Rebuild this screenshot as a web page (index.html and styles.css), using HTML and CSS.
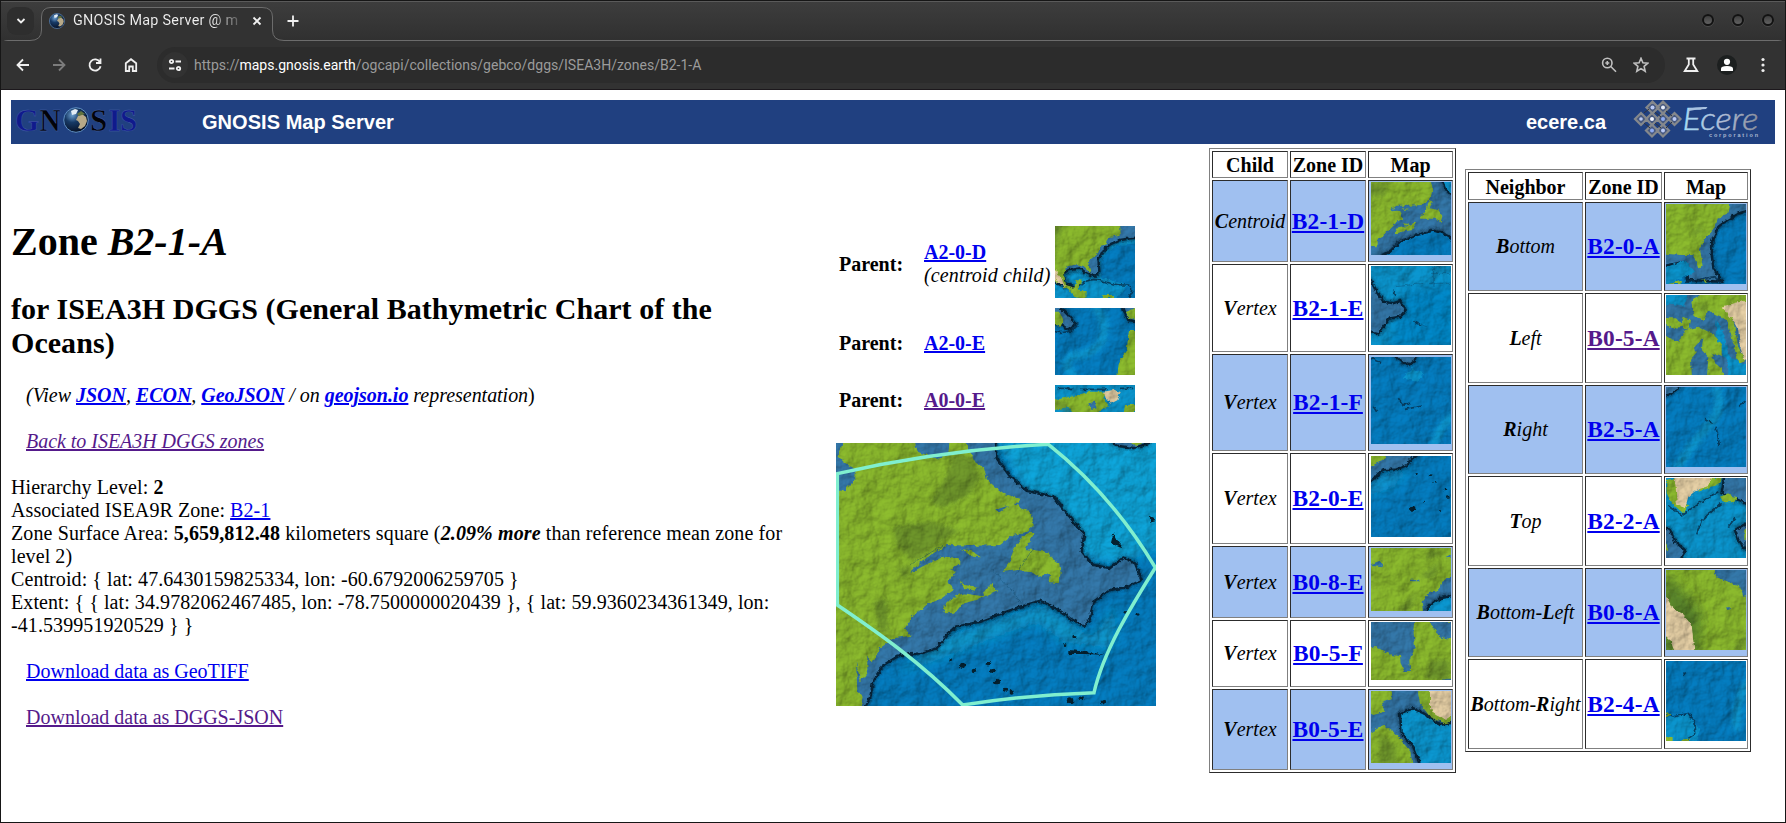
FILE: index.html
```html
<!DOCTYPE html>
<html lang="en">
<head>
<meta charset="utf-8">
<title>GNOSIS Map Server</title>
<link rel="stylesheet" href="styles.css">
</head>
<body>
<svg class="defs" width="0" height="0" aria-hidden="true">
  <defs>
    <filter id="relief" x="0" y="0" width="100%" height="100%" color-interpolation-filters="sRGB">
      <feTurbulence type="fractalNoise" baseFrequency="0.07" numOctaves="3" seed="4" result="n"/>
      <feDisplacementMap in="SourceGraphic" in2="n" scale="13" xChannelSelector="R" yChannelSelector="G" result="g"/>
      <feTurbulence type="fractalNoise" baseFrequency="0.018" numOctaves="5" seed="9" result="t"/>
      <feDiffuseLighting in="t" surfaceScale="9" diffuseConstant="1" lighting-color="#fff" result="l"><feDistantLight azimuth="225" elevation="60"/></feDiffuseLighting>
      <feComposite in="g" in2="l" operator="arithmetic" k1="0.75" k2="0.33" k3="0" k4="0"/>
    </filter>
    <filter id="soft" x="-20%" y="-20%" width="140%" height="140%"><feGaussianBlur stdDeviation="16"/></filter>
    <radialGradient id="globe" cx=".35" cy=".3" r=".75"><stop offset="0" stop-color="#6da0d0"/><stop offset=".4" stop-color="#173a66"/><stop offset="1" stop-color="#050d20"/></radialGradient>
    <linearGradient id="chrome" x1="0" y1="0" x2="1" y2="0"><stop offset="0" stop-color="#a5dcf5"/><stop offset=".5" stop-color="#b3bfd8"/><stop offset="1" stop-color="#8c919c"/></linearGradient>
    <linearGradient id="knob" x1="0" y1="0" x2="0" y2="1"><stop offset="0" stop-color="#3a3a3a"/><stop offset="1" stop-color="#666"/></linearGradient>
    <symbol id="earth" viewBox="0 0 26 26"><circle cx="13" cy="13" r="12.3" fill="url(#globe)" stroke="#5f8fc4" stroke-width="1"/><path d="M15 9l4-2 4 3 1 4-2 5-4 3-3-1 2-4-2-3-2-1z" fill="#b7a988"/><path d="M8 4l4-2 3 1-2 4-4 1z" fill="#e3edf5"/><path d="M14 7l4-3 4 3-6 2z" fill="#61733f"/></symbol>
  </defs>
</svg>
<div class="window">
  <div class="tabstrip">
    <svg class="outline" width="1784" height="46" viewBox="1 1 1784 46" fill="none">
      <path d="M1 47Q1 40.500 8 40.500H30Q41.500 40.500 41.500 30V17Q41.500 7.500 51 7.500H262Q272.500 7.500 272.500 17V30Q272.500 40.500 284 40.500H1778Q1785 40.500 1785 47Z" fill="#323232" stroke="#6c6c6c"/>
    </svg>
    <button class="chev"><svg width="10" height="10" viewBox="0 0 10 10"><path d="M1.500 3L5 6.500 8.500 3"/></svg></button>
    <div class="tab">
      <svg width="16" height="16"><use href="#earth"/></svg>
      <span class="tabname">GNOSIS Map Server @ m</span>
      <svg class="ln" width="10" height="10" viewBox="0 0 10 10"><path d="M1.500 1.500l7 7M8.500 1.500l-7 7"/></svg>
    </div>
    <svg class="ln plus" width="12" height="12" viewBox="0 0 12 12"><path d="M6 .5v11M.5 6h11"/></svg>
    <svg class="knobs" width="72" height="14" viewBox="0 0 72 14"><g fill="none" stroke="#4c4c4c"><circle cx="6" cy="7.500" r="6"/><circle cx="36" cy="7.500" r="6"/><circle cx="66" cy="7.500" r="6"/></g><g fill="url(#knob)" stroke="#121212" stroke-width="2"><circle cx="6" cy="7" r="5"/><circle cx="36" cy="7" r="5"/><circle cx="66" cy="7" r="5"/></g></svg>
  </div>
  <div class="toolbar">
    <svg class="ln" width="16" height="16" viewBox="0 0 16 16"><path d="M14 8H2.500M8 2.500L2.500 8 8 13.500"/></svg>
    <svg class="ln dim" width="16" height="16" viewBox="0 0 16 16"><path d="M2 8H13.500M8 2.500L13.500 8 8 13.500"/></svg>
    <svg class="ln" width="16" height="16" viewBox="0 0 16 16"><path d="M13 5.200A5.600 5.600 0 1 0 13.600 9.200M13.500 1.500V6H9"/></svg>
    <svg class="ln" width="16" height="16" viewBox="0 0 16 16"><path d="M2.800 6.300L8 2.200 13.200 6.300V14H9.800V9.500H6.200V14H2.800Z"/></svg>
    <div class="omnibox">
      <span class="site"><svg class="ln" width="14" height="14" viewBox="0 0 14 14"><circle cx="3.500" cy="3.500" r="1.700"/><path d="M7.500 3.500H13M1 10.500H6.500"/><circle cx="10.500" cy="10.500" r="1.700"/></svg></span>
      <span class="url">https://<b>maps.gnosis.earth</b>/ogcapi/collections/gebco/dggs/ISEA3H/zones/B2-1-A</span>
      <svg class="ln mid" width="16" height="16" viewBox="0 0 16 16"><circle cx="6.300" cy="6" r="4.700"/><path d="M9.800 9.500L15 14.700M6.300 4v4M4.300 6h4"/></svg>
      <svg class="ln mid star" width="16" height="16" viewBox="0 0 16 16"><path d="M8 1.300L9.900 5.800 14.800 6.200 11.100 9.400 12.200 14.200 8 11.600 3.800 14.200 4.900 9.400 1.200 6.200 6.100 5.800Z"/></svg>
    </div>
    <svg class="ln flask" width="16" height="16" viewBox="0 0 16 16"><path d="M3.500 1.500H12.500M5.800 1.500V7.500L1.700 14H14.300L10.200 7.500V1.500"/></svg>
    <svg class="user" width="20" height="20" viewBox="0 0 20 20"><circle cx="10" cy="10" r="10" fill="#1c1f1f"/><circle cx="10" cy="6.800" r="3.100" fill="#fff"/><path d="M4 16V13.600Q4 11 10 11T16 13.600V16Z" fill="#fff"/></svg>
    <svg width="4" height="16" viewBox="0 0 4 16" fill="#eee"><circle cx="2" cy="2.500" r="1.600"/><circle cx="2" cy="8" r="1.600"/><circle cx="2" cy="13.500" r="1.600"/></svg>
  </div>

  <div class="page">
    <header class="banner">
      <svg class="gnosis" width="128" height="44" viewBox="10 100 128 44">
        <g font-family="Liberation Serif" font-size="31" stroke="#4a62a8" stroke-width=".4"><text x="14" y="130.500" fill="#101a8c">G</text><text x="38.500" y="130.500" fill="#020308" textLength="21" lengthAdjust="spacingAndGlyphs">N</text><text x="89" y="130.500" fill="#020308">S</text><text x="107.500" y="130.500" fill="#101a8c">I</text><text x="119" y="130.500" fill="#101a8c">S</text></g>
        <use href="#earth" x="62" y="107" width="26" height="26"/>
      </svg>
      <span class="brand">GNOSIS Map Server</span>
      <span class="ecere">ecere.ca</span>
      <svg class="ecorp" width="130" height="44" viewBox="1632 100 130 44">
        <g fill="#46587f" stroke="#85888c" stroke-width="2.200"><path d="M1652.500 101.500l6 6-6 6-6-6zM1663 101.500l6 6-6 6-6-6zM1641 113l6 6-6 6-6-6zM1652 113l6 6-6 6-6-6zM1663 113l6 6-6 6-6-6zM1674.500 113l6 6-6 6-6-6zM1652 124.500l6 6-6 6-6-6zM1663 124.500l6 6-6 6-6-6z"/></g>
        <g stroke="#31343c" stroke-width="1"><path d="M1644 113l5-4M1666 111l6 5M1644 123l6 5M1666 128l6-6M1655 112l6 5M1655 123l6 5" fill="none"/></g>
        <g fill="#b9c9f5"><circle cx="1652.500" cy="107.500" r="2"/><circle cx="1663" cy="107.500" r="2" fill="#e6ecf8"/><circle cx="1641" cy="119" r="1.800"/><circle cx="1652" cy="119" r="2" fill="#f4f6ff"/><circle cx="1663" cy="119" r="2" fill="#8daaf2"/><circle cx="1674.500" cy="119" r="2"/><circle cx="1652" cy="130.500" r="2" fill="#8daaf2"/><circle cx="1663" cy="130.500" r="2"/></g>
        <text x="1682.500" y="130" font-family="Lato" font-weight="300" font-style="italic" font-size="32" fill="url(#chrome)" stroke="url(#chrome)" stroke-width=".5" textLength="76" lengthAdjust="spacingAndGlyphs">Ecere</text>
        <path d="M1689 108.500Q1697 106.500 1707.500 107L1706 109Q1697 109 1689 111Z" fill="#a9c2e0"/>
        <text x="1709" y="136.500" font-family="Liberation Sans" font-weight="bold" font-size="5.500" fill="#a9b8d0" textLength="49">corporation</text>
      </svg>
    </header>

    <main class="content">
      <section class="info">
        <h1>Zone <i>B2-1-A</i></h1>
        <h2>for ISEA3H DGGS (General Bathymetric Chart of the Oceans)</h2>
        <p class="in"><i>(View <b><a href="#">JSON</a></b>, <b><a href="#">ECON</a></b>, <b><a href="#">GeoJSON</a></b> / on <b><a href="#">geojson.io</a></b> representation</i>)</p>
        <p class="in"><i><a class="seen" href="#">Back to ISEA3H DGGS zones</a></i></p>
        <div class="facts">
          <div>Hierarchy Level: <b>2</b></div>
          <div>Associated ISEA9R Zone: <a href="#">B2-1</a></div>
          <div class="area">Zone Surface Area: <b>5,659,812.48</b> kilometers square (<b><i>2.09% more</i></b> than reference mean zone for</div>
          <div>level 2)</div>
          <div>Centroid: { lat: 47.6430159825334, lon: -60.6792006259705 }</div>
          <div>Extent: { { lat: 34.9782062467485, lon: -78.7500000020439 }, { lat: 59.9360234361349, lon:</div>
          <div>-41.539951920529 } }</div>
        </div>
        <p class="in"><a href="#">Download data as GeoTIFF</a></p>
        <p class="in"><a class="seen" href="#">Download data as DGGS-JSON</a></p>
      </section>

      <section class="maps">
        <div class="parents">
          <b class="lbl">Parent:</b><div class="lbl"><b><a href="#">A2-0-D</a></b><div class="note">(centroid child)</div></div>
          <svg class="m" height="72" viewBox="675 33 240 216"><g filter="url(#relief)"><path class="w" d="M655 13H935V269H655z"/><path class="d" d="M815 130L860 90 935 85V269H850L890 210 810 185z"/><path class="s e" d="M655 13H935V66L900 70 870 75 840 88 818 108 805 135 808 170 795 185 770 175 750 160 715 165 700 175 705 205 740 220 655 200z"/><path class="l" d="M655 13H870L872 62 835 70 830 88 812 92 800 120 778 135 775 148 783 176 774 168 765 153 740 148 710 155 702 175 708 210 733 218 740 195 757 197 745 223 770 230 768 269H750L715 222 655 185zM820 240h28l5 9h-35z"/><path class="hill" d="M655 13H710Q670 80 680 140L655 160z"/><path class="y" d="M670 165L690 180 705 215 690 208 670 185z"/><path class="ed" d="M748 213Q775 185 815 198T888 210 890 260"/><path class="w" d="M675 205L750 255H670z"/></g></svg>
          <b class="lbl">Parent:</b><b class="lbl"><a href="#">A2-0-E</a></b>
          <svg class="m" height="67" viewBox="675 279 240 201"><g filter="url(#relief)"><path class="d" d="M655 259H935V500H655z"/><path class="ridge" d="M790 270Q830 310 820 360T745 420 735 490"/><path class="s e" d="M655 275L690 275 718 305 735 325 720 345 690 325 655 330zM872 259H935V325L895 315z"/><path class="l" d="M655 290l35 0 10 25-8 20-37-15zM890 290l30-15v40l-22-5zM897 345H935V500H865Q855 440 890 405z"/><path class="ed" d="M655 345Q700 360 725 345L745 325"/></g></svg>
          <b class="lbl">Parent:</b><b class="lbl"><a class="seen" href="#">A0-0-E</a></b>
          <svg class="m" height="27" viewBox="675 510 240 81"><g filter="url(#relief)"><path class="w" d="M655 490H935V611H655z"/><path class="ed" d="M680 520h50M750 523h80M870 520h40"/><path class="l" d="M655 560L720 545 780 530 830 530 820 550 835 570 805 590 800 611H740L715 575 675 585zM885 570l30 0v30h-35z"/><path class="hill" d="M660 560l40 0 30 30-10 10z"/><path class="s" d="M775 565l20-5 5 20-15 5z"/><path class="y" d="M822 530l30-6 20 7-10 25-20 10-15-15z"/></g></svg>
        </div>
        <svg class="big" width="320" height="263" viewBox="18 24 960 789">
          <g filter="url(#relief)">
            <path class="d" d="M-20-10H1010V850H-20z"/>
            <path d="M490 0H1010V330L860 390 740 360 600 200z" fill="#0b9bcd" filter="url(#soft)"/>
            <path d="M330 610L640 510 790 610 860 500 850 640 700 620 620 560 200 720z" fill="#0d8fc0" filter="url(#soft)"/>
            <path class="s e" d="M-20-20H490L500 70 540 125 590 168 670 185 710 235 762 298 755 350 790 390 840 400 880 368 915 385 935 435 895 455 840 465 790 500 780 550 762 572 720 550 660 510 630 497 570 515 450 560 380 575 350 600 320 640 270 655 210 660 160 690 130 735 120 790 90 840H-20z"/>
            <path class="s e" d="M845 15h100l10 10-45 14-55-8z"/><ellipse cx="920" cy="24" rx="16" ry="5" class="l"/>
            <path class="l" d="M50 0H250L262 50 325 72 355 58 360 0H395L425 60 440 85 462 100 472 135 495 155 525 178 570 192 555 208 600 232 612 270 590 290 550 300 510 330 440 332 350 330 310 355 265 388 240 415 290 388 340 365 385 368 392 385 360 402 378 410 350 440 372 462 335 490 290 510 245 545 225 580 242 602 190 610 150 640 128 682 112 665 112 710 92 740 78 680 82 770 98 785 85 850H-20V175L45 165 75 135 78 105 40 80 22 60z"/>
            <path class="l" d="M600 290l15 2-30 50 25 3 45 7 10 18 22 15 5 25-6 35-30-4 4-24-35 8-25-17-40-3-42 6 22-30 10-35 20-32zM345 535l-5-20 25-25 35-15 55 8 30-40 6 16 12 6-63 30-40 10-25 28zM390 343l30 2 33 22-23-2zM388 435l17 15 38 5-8 12-32-5z"/>
            <path class="hill blur" d="M370 60L430 65 450 130 420 180 340 220 300 200 340 140zM190 275L300 260 390 285 350 310 250 380 200 330zM130 500L170 490 175 600 150 590zM205 400l40-10-20 45z"/>
            <path d="M495 224l40-12-25 18z" class="s"/>
            <path class="fault" d="M480 400L540 460 575 505M240 390L340 330M555 420L610 340"/>
            <g class="spots"><circle cx="398" cy="691" r="8"/><circle cx="362" cy="674" r="4"/><circle cx="475" cy="686" r="8"/><circle cx="489" cy="708" r="7"/><circle cx="432" cy="708" r="7"/><circle cx="500" cy="740" r="8"/><circle cx="528" cy="764" r="6"/><circle cx="545" cy="770" r="6"/><circle cx="720" cy="797" r="10"/><circle cx="755" cy="790" r="6"/><circle cx="820" cy="800" r="8"/><circle cx="733" cy="605" r="6"/><circle cx="705" cy="629" r="4"/><circle cx="924" cy="537" r="5"/><circle cx="885" cy="532" r="4"/><path d="M850 295l8 15 22 30-12-5-25-12zM715 645l60 5 50 10-60-3-50 0zM960 245l18 10-18 5z"/></g>
          </g>
          <path fill="none" stroke="#80efcf" stroke-width="10.500" d="M22 116Q330 46 655 28C790 135 900 270 976 398C900 520 820 650 792 773Q590 779 398 810C270 680 140 590 22 510Z"/>
        </svg>
      </section>

      <table class="zones kids">
        <tr><th>Child</th><th>Zone ID</th><th>Map</th></tr>
        <tr><td><i><b>C</b>entroid</i></td><td class="id"><a href="#">B2-1-D</a></td><td class="pic"><svg class="m" height="73" viewBox="513 126 240 219"><g filter="url(#relief)"><path class="s" d="M493 106H773V365H493z"/><path class="l" d="M493 106H690L697 145 692 175 665 195 625 197 590 197 570 210 600 213 607 235 580 255 550 285 533 300 533 322 493 320zM690 180l7 3-12 22 30 5 12 18-5 20-12-12-28 0-22 0 15-20zM603 203l28 8-20-2zM585 282l5-16 22-5 38-15-15 25-25 3zM605 248l20 5-10 4z"/><path class="hill" d="M500 130h70l-20 40h-40z"/><path class="d e" d="M520 360L570 335 600 305 650 285 700 272 730 280 773 310V365z"/><path class="w e" d="M720 106L740 150 773 185V106z"/></g></svg></td></tr>
        <tr><td><i><b>V</b>ertex</i></td><td class="id"><a href="#">B2-1-E</a></td><td class="pic"><svg class="m" height="79" viewBox="513 378 240 237"><g filter="url(#relief)"><path class="w" d="M493 358H773V635H493z"/><path d="M620 450L773 430V635H560z" fill="#0480bd" filter="url(#soft)"/><path class="s e" d="M493 410L513 420 530 455 550 485 580 490 600 483 617 510 600 530 570 535 550 560 535 580 493 570z"/><path class="fault" d="M700 370v70M690 400h60M710 380h20M590 440l80-10M690 430h60M650 550l30 10"/><path class="ed" d="M578 452l10 15M640 545l20 8"/></g></svg></td></tr>
        <tr><td><i><b>V</b>ertex</i></td><td class="id"><a href="#">B2-1-F</a></td><td class="pic"><svg class="m" height="87" viewBox="513 651 240 261"><g filter="url(#relief)"><path class="d" d="M493 631H773V932H493z"/><path class="ridge" d="M773 820Q720 850 700 920"/><path class="s e" d="M570 631H650L645 660 625 675 600 660z"/><path class="w" d="M605 715l30-30 35 15-15 25z"/><path class="ed" d="M513 655l30 15M595 775l15 20 18-5M615 808l50-10M520 800l10 15"/></g></svg></td></tr>
        <tr><td><i><b>V</b>ertex</i></td><td class="id"><a href="#">B2-0-E</a></td><td class="pic"><svg class="m" height="81" viewBox="513 18 240 243"><g filter="url(#relief)"><path class="d" d="M493-2H773V281H493z"/><path class="w" d="M510 85L640 50 580 110 500 140z" filter="url(#soft)"/><path class="s e" d="M493-2H665L640 20 620 45 590 58 555 60 535 70 520 90 493 100z"/><path class="l" d="M493-2H560L555 30 530 40 515 48 493 50z"/><g class="spots"><circle cx="638" cy="175" r="8"/><circle cx="650" cy="70" r="4"/><circle cx="690" cy="77" r="4"/><circle cx="705" cy="97" r="4"/><circle cx="735" cy="120" r="4"/><circle cx="745" cy="140" r="4"/><circle cx="672" cy="155" r="3"/><circle cx="720" cy="180" r="3"/></g></g></svg></td></tr>
        <tr><td><i><b>V</b>ertex</i></td><td class="id"><a href="#">B0-8-E</a></td><td class="pic"><svg class="m" height="63" viewBox="513 294 240 189"><g filter="url(#relief)"><path class="l" d="M493 274H773V503H493z"/><path class="hill" d="M590 483l60-60-20 60zM660 380l60-50-20 60zM690 300l50 10-70 20z"/><path class="s" d="M513 343l25-10 15 10-8 6-30-4zM630 389h28v5h-28zM735 325l20-10v8zM773 375L740 385 722 400 718 420 690 425 665 455 672 503H773z"/><path class="w e" d="M670 500L690 465 720 445 773 435V503z"/></g></svg></td></tr>
        <tr><td><i><b>V</b>ertex</i></td><td class="id"><a href="#">B0-5-F</a></td><td class="pic"><svg class="m" height="58" viewBox="513 516 240 174"><g filter="url(#relief)"><path class="l" d="M493 496H773V710H493z"/><path class="s" d="M493 496H645L640 540 645 590 628 630 630 662 615 665 602 640 600 618 575 615 555 605 530 592 493 590zM675 505l30-10 35 20h40l-15 35-25 20-30-20-15-25zM730 686h30v10h-30z"/><path class="hill" d="M690 630h60v60h-70z"/></g></svg></td></tr>
        <tr><td><i><b>V</b>ertex</i></td><td class="id"><a href="#">B0-5-E</a></td><td class="pic"><svg class="m" height="72" viewBox="513 723 240 216"><g filter="url(#relief)"><path class="s" d="M493 703H773V959H493z"/><path class="w e" d="M600 790L640 775 680 795 720 825 773 815V959H670L640 890 605 850z"/><path class="l" d="M493 703H580L575 745 545 755 555 785 520 795 493 780zM493 860L550 825 580 845 605 870 630 900 640 959H493zM650 703H773V810L735 820 690 800 660 760z"/><path class="hill" d="M540 850l50 40v60h-60zM665 730l20 50 40 25h20v10l-50-15-35-40z"/><path class="y" d="M690 715H773V785L735 810 690 780z"/></g></svg></td></tr>
      </table>

      <table class="zones near">
        <tr><th>Neighbor</th><th>Zone ID</th><th>Map</th></tr>
        <tr><td><i><b>B</b>ottom</i></td><td class="id"><a href="#">B2-0-A</a></td><td class="pic"><svg class="m" height="80" viewBox="633 132 240 240"><g filter="url(#relief)"><path class="d" d="M613 112H893V392H613z"/><path class="s e" d="M613 112H893V148L850 160 820 178 790 200 772 240 770 285 775 325 800 365 700 360 690 305 613 320z"/><path class="w" d="M613 330L690 300 720 335 640 375 613 380z"/><path class="l" d="M613 112H825L818 160 790 175 775 210 745 240 735 265 743 320 730 325 715 285 680 285 613 280zM640 372l40-10v10zM735 355l25 10-10 5z"/><path class="hill" d="M700 230l45-45-10 35z"/><path class="ed" d="M690 365l90-15 20 30"/></g></svg></td></tr>
        <tr><td><i><b>L</b>eft</i></td><td class="id"><a class="seen" href="#">B0-5-A</a></td><td class="pic"><svg class="m" height="80" viewBox="633 405 240 240"><g filter="url(#relief)"><path class="s" d="M613 385H893V665H613z"/><path class="w" d="M613 385H700L690 440 613 430zM785 480l25 50 10 60 60 25v60h-60v-70l-40-60z"/><path class="l" d="M613 520L670 545 690 510 730 500 770 520 800 555 800 590 770 580 780 610 800 625 810 665H755L760 590 740 570 745 530 720 560 725 580 708 600 712 665H613zM705 425L740 405 790 400 893 385V460L830 455 850 560 870 600 850 610 830 530 815 480 780 465 760 450 745 480 720 470zM633 475h30l15 15 5-20 25 10-5 30-20-10-30 5-20-10z"/><path class="y" d="M800 440L840 428 893 420V590L868 600 855 560 850 510 830 475z"/><path class="hill" d="M730 440l30-20-10 50zM750 500l40 40h-20z"/></g></svg></td></tr>
        <tr><td><i><b>R</b>ight</i></td><td class="id"><a href="#">B2-5-A</a></td><td class="pic"><svg class="m" height="80" viewBox="633 681 240 240"><g filter="url(#relief)"><path class="d" d="M613 661H893V941H613z"/><path class="ridge" d="M780 680Q810 740 770 785T660 930"/><path class="s e" d="M613 661H685L665 690 640 705 613 710z"/><path class="ed" d="M783 800l5 25 5 30M750 775l20 15M850 740l20-15"/></g></svg></td></tr>
        <tr><td><i><b>T</b>op</i></td><td class="id"><a href="#">B2-2-A</a></td><td class="pic"><svg class="m" height="80" viewBox="633 24 240 240"><g filter="url(#relief)"><path class="w" d="M613 4H893V284H613z"/><path class="ed" d="M640 105L680 135 730 100 790 65M725 190L740 150 800 100M820 170L840 145"/><path class="s e" d="M810 4H893V110L850 90 800 70zM613 160L645 180 660 215 690 240 670 284H613zM840 180l35-20v80l-25-30z"/><path class="l" d="M633 30L660 24 670 95 700 105 685 130 650 100 635 70zM740 24H800L795 40 760 55 730 65zM795 80l20-8 32 10-10 15-30 0zM868 180h20v30h-20zM630 220l10 15-10 10z"/><path class="y" d="M655 4H780L760 48 725 60 700 80 690 115 665 100 662 50z"/></g></svg></td></tr>
        <tr><td><i><b>B</b>ottom-<b>L</b>eft</i></td><td class="id"><a href="#">B0-8-A</a></td><td class="pic"><svg class="m" height="80" viewBox="633 300 240 240"><g filter="url(#relief)"><path class="l" d="M613 280H893V560H613z"/><path d="M633 310L690 370 740 430 730 560H613z" fill="#3e6528" opacity=".7" filter="url(#soft)"/><path class="s" d="M765 280H893V375L865 380 855 350 820 335 785 322 780 305zM813 412l10 0 2 6-8 2z"/><path class="y" d="M630 370L650 410 680 430 710 465 720 560H665L645 510 613 480z"/><path class="hill" d="M835 540l35-45v30l-15 20z"/></g></svg></td></tr>
        <tr><td><i><b>B</b>ottom-<b>R</b>ight</i></td><td class="id"><a href="#">B2-4-A</a></td><td class="pic"><svg class="m" height="80" viewBox="633 573 240 240"><g filter="url(#relief)"><path class="d" d="M613 553H893V833H613z"/><path class="ridge" d="M885 630Q840 690 845 780"/><path class="w" d="M630 740L700 735 735 780 720 820H625z"/><path class="ed" d="M630 730L660 740 700 730 720 755 722 790 700 805M682 608l8 6"/><path class="l" d="M633 800l20 5v12h-25zM680 808l25-2v10h-25zM633 728l15 6-15 4z"/></g></svg></td></tr>
      </table>
    </main>
  </div>
</div>
</body>
</html>
```
FILE: styles.css
```css
* { box-sizing: border-box; }
body { margin: 0; }
svg { display: block; overflow: hidden; flex: none; }
.defs { position: absolute; }
.window {
  width: 1786px; height: 823px; overflow: hidden;
  border: 1px solid #161616; background: #fff;
  font: 20px/23px "Liberation Serif", serif; color: #000;
}

/* browser frame */
.tabstrip {
  position: relative; height: 40px; display: flex; align-items: flex-start;
  padding: 6px 11px 0 6px; background: linear-gradient(#3d3d3d, #303030);
  border-top: 1px solid #5a5a5a;
}
.tabstrip > * { position: relative; }
.tabstrip .outline { position: absolute; left: 0; top: -1px; overflow: visible; }
.chev {
  width: 27px; height: 28px; margin-top: -1px; padding: 0; border: 0; border-radius: 9px;
  background: #2e2e2e; display: flex; align-items: center; justify-content: center;
}
.chev svg, .ln { fill: none; stroke: #f0f0f0; stroke-width: 1.8; }
.tab { display: flex; align-items: center; width: 231px; height: 26px; padding: 0 10px 0 8px; margin-left: 7px; }
.tabname {
  flex: 1; margin: 0 10px 0 8px; font: 14.4px/20px Roboto, sans-serif; letter-spacing: .27px; white-space: nowrap; overflow: hidden;
  color: transparent; background: linear-gradient(90deg, #efefef 140px, #444 170px); -webkit-background-clip: text; background-clip: text;
}
.plus { margin: 7px 0 0 15px; }
.knobs { margin: 5px 0 0 auto; }
.toolbar {
  position: relative; height: 49px; display: flex; align-items: center; padding: 0 20px 1px 14px;
  background: #323232; border-bottom: 1px solid #1c181c;
}
.toolbar > .ln + .ln { margin-left: 20px; }
.dim { stroke: #7c7c7c; }
.omnibox {
  width: 1508px; height: 36px; margin-left: 18px; border-radius: 18px; background: #2c2c2c;
  display: flex; align-items: center; padding: 0 16px 0 5px;
}
.site { width: 26px; height: 26px; border-radius: 50%; background: #323232; display: grid; place-items: center; }
.url { flex: 1; margin-left: 6px; padding-top: 1px; font: 14.02px/20px Roboto, sans-serif; color: #9b9b9b; white-space: nowrap; }
.url b { font-weight: 400; color: #fff; }
.mid { stroke: #c0c0c0; stroke-width: 1.6; }
.star { margin-left: 16px; }
.toolbar > .flask { margin-left: 18px; }
.user { margin-left: 18px; margin-right: 24px; }

/* page */
.page { padding: 10px 10px 0; }
.banner {
  height: 44px; background: #204080; color: #fff; display: flex; align-items: center;
  font: bold 20px/23px "Liberation Sans", sans-serif;
}
.brand { margin-left: 63px; letter-spacing: .04px; }
.ecere { margin-left: auto; margin-right: 26px; }
.ecorp { margin-right: 13px; overflow: visible; }
.content { display: flex; align-items: flex-start; }
.info { width: 800px; margin-top: 75px; }
h1 { font-size: 40px; line-height: 46px; margin: 0 0 27px; }
h2 { font-size: 30px; line-height: 34px; margin: 0 0 24px; letter-spacing: .05px; }
p { margin: 0 0 23px; }
.in { padding-left: 15px; }
.in i { letter-spacing: -.03px; }
.facts { margin-bottom: 23px; letter-spacing: .08px; white-space: nowrap; }
.area { letter-spacing: .115px; }
a { color: #0000ee; text-decoration: underline; }
a.seen { color: #551a8b; }

.maps { width: 320px; margin: 82px 0 0 25px; }
.parents { display: grid; grid-template-columns: 85px 131px 80px; row-gap: 10px; padding-left: 3px; margin-bottom: 31px; }
.lbl { align-self: center; padding-top: 4px; white-space: nowrap; }
.note { font-style: italic; letter-spacing: .14px; }
.m { width: 80px; }

.zones {
  border-collapse: separate; border-spacing: 2px; table-layout: fixed;
  border: 1px solid; border-color: #808080 #2c2c2c #2c2c2c #808080; text-align: center;
}
.zones th, .zones td { border: 1px solid; border-color: #2c2c2c #808080 #808080 #2c2c2c; padding: 0; white-space: nowrap; }
.zones th { padding-top: 1px; line-height: 22px; }
.zones tr:nth-child(even) td { background: #a0c0f0; }
.zones .id { font-size: 23.4px; line-height: 27px; font-weight: bold; letter-spacing: .15px; }
.zones .pic { vertical-align: top; }
.kids { width: 247px; margin: 4px 0 0 53px; }
.kids th { width: 76px; height: 27px; }
.kids th:last-child { width: 85px; }
.kids .pic { padding: 1px 0 0 2px; }
.kids tr:nth-child(2) { height: 82px; }
.kids tr:nth-child(3) { height: 88px; }
.kids tr:nth-child(4) { height: 97px; }
.kids tr:nth-child(5) { height: 91px; }
.kids tr:nth-child(6) { height: 72px; }
.kids tr:nth-child(7) { height: 67px; }
.kids tr:nth-child(8) { height: 81px; }
.kids tr:nth-child(4) .pic, .kids tr:nth-child(5) .pic { padding-top: 2px; }
.near { width: 286px; margin: 25px 0 0 9px; }
.near th { width: 77px; height: 28px; }
.near th:first-child { width: 115px; }
.near th:last-child { width: 84px; }
.near tr:nth-child(even) { height: 89px; }
.near tr:nth-child(n+3):nth-child(odd) { height: 90px; }
.near .pic { padding: 1px 0 0 1px; }

/* relief map colours */
.l { fill: #84b02b; }
.s { fill: #3171a0; }
.d { fill: #0476b6; }
.w { fill: #0a8dc3; }
.y { fill: #d9c49c; }
.e { stroke: #062338; stroke-width: 7; filter: drop-shadow(0 0 7px #03192a); }
.ed { fill: none; stroke: #06304c; stroke-width: 5; opacity: .8; }
.hill { fill: #4c6a28; opacity: .45; filter: blur(6px); }
.ridge { fill: none; stroke: #129ccb; stroke-width: 26; opacity: .6; filter: blur(7px); }
.fault { fill: none; stroke: #0b4468; stroke-width: 2; opacity: .6; }
.spots { fill: #04202f; }
```
